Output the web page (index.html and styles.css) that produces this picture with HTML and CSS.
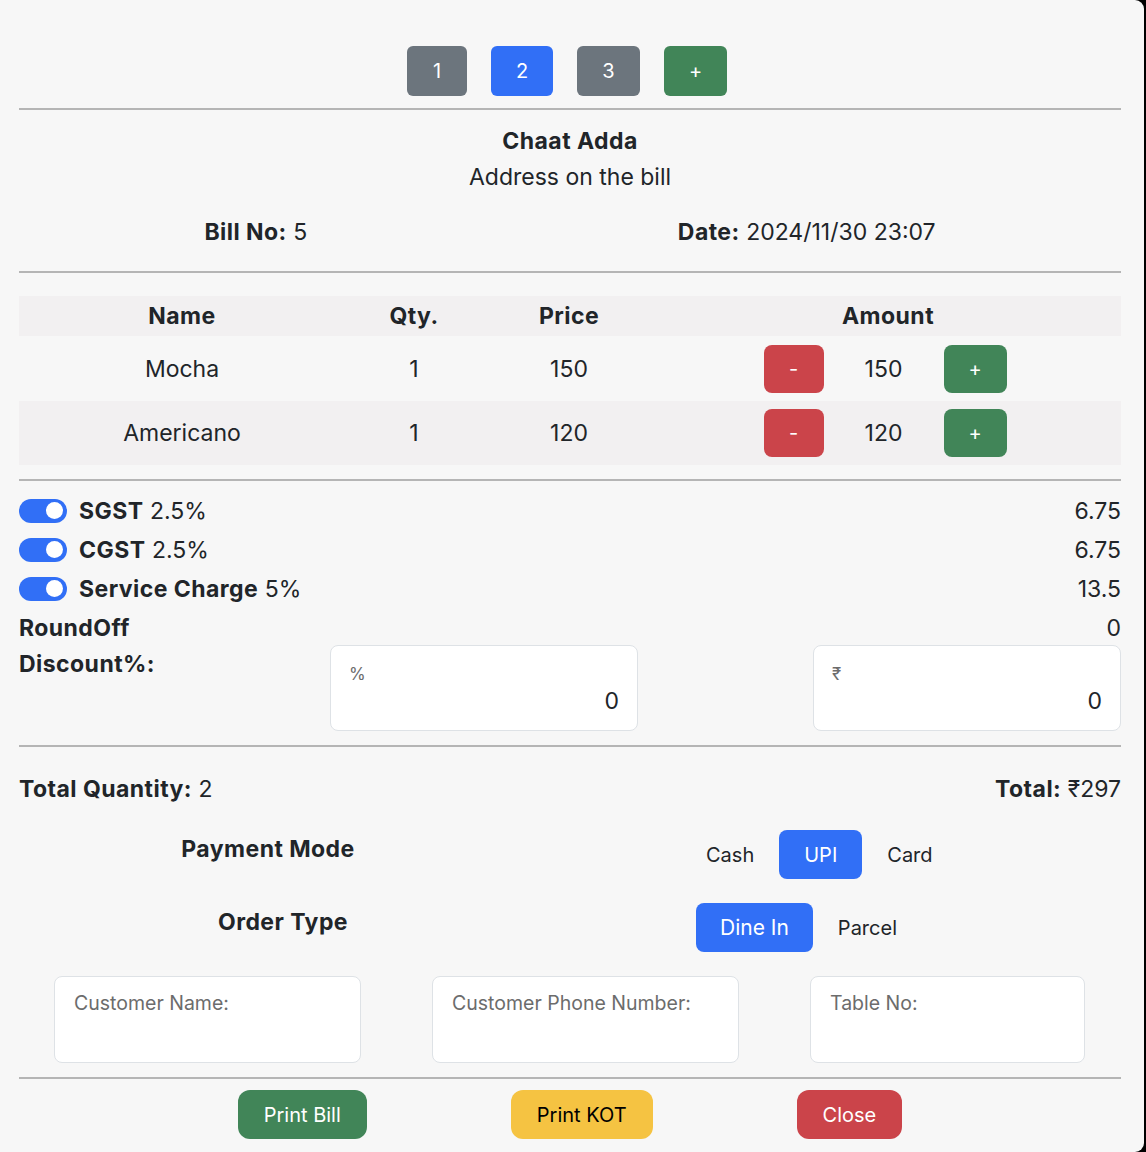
FILE: index.html
```html
<!DOCTYPE html>
<html>
<head>
<meta charset="utf-8">
<link rel="stylesheet" href="styles.css">
</head>
<body>
<div class="modal">
  <div class="tabs">
    <button class="btn tab gray narrow">1</button>
    <button class="btn tab blue">2</button>
    <button class="btn tab gray wide">3</button>
    <button class="btn tab green wide">+</button>
  </div>
  <hr class="sep sep-top">
  <div class="shop">
    <div class="shop-name">Chaat Adda</div>
    <div class="shop-addr">Address on the bill</div>
  </div>
  <div class="bill-meta">
    <div><b>Bill No:</b> 5</div>
    <div><b>Date:</b> 2024/11/30 23:07</div>
  </div>
  <hr class="sep">
  <table class="items">
    <thead>
      <tr><th class="c-name">Name</th><th class="c-qty">Qty.</th><th class="c-price">Price</th><th class="c-amt">Amount</th></tr>
    </thead>
    <tbody>
      <tr>
        <td>Mocha</td><td>1</td><td>150</td>
        <td><div class="amt"><button class="btn step red">-</button><span class="amt-val">150</span><button class="btn step green wide">+</button></div></td>
      </tr>
      <tr class="striped">
        <td>Americano</td><td>1</td><td>120</td>
        <td><div class="amt"><button class="btn step red">-</button><span class="amt-val">120</span><button class="btn step green wide">+</button></div></td>
      </tr>
    </tbody>
  </table>
  <hr class="sep sep-table">
  <div class="charges">
    <div class="charge"><span class="toggle"><span class="knob"></span></span><span><b>SGST</b> 2.5%</span><span class="val">6.75</span></div>
    <div class="charge"><span class="toggle"><span class="knob"></span></span><span><b>CGST</b> 2.5%</span><span class="val">6.75</span></div>
    <div class="charge"><span class="toggle"><span class="knob"></span></span><span><b>Service Charge</b> 5%</span><span class="val">13.5</span></div>
    <div class="charge"><span><b>RoundOff</b></span><span class="val">0</span></div>
  </div>
  <div class="discount">
    <div class="disc-label"><b>Discount%:</b></div>
    <div class="field">
      <span class="field-label small">%</span>
      <input class="field-input" type="text" value="0">
    </div>
    <div></div>
    <div class="field">
      <span class="field-label small">₹</span>
      <input class="field-input" type="text" value="0">
    </div>
  </div>
  <hr class="sep sep-disc">
  <div class="totals">
    <div><b>Total Quantity:</b> 2</div>
    <div><b>Total:</b> ₹297</div>
  </div>
  <div class="opt-row pay">
    <div class="opt-label">Payment Mode</div>
    <div class="opt-group">
      <button class="btn opt">Cash</button>
      <button class="btn opt blue">UPI</button>
      <button class="btn opt">Card</button>
    </div>
  </div>
  <div class="opt-row order">
    <div class="opt-label">Order Type</div>
    <div class="opt-group">
      <button class="btn opt blue big">Dine In</button>
      <button class="btn opt">Parcel</button>
    </div>
  </div>
  <div class="customer">
    <div class="field cust"><span class="field-label">Customer Name:</span><input class="field-input" type="text"></div>
    <div class="field cust"><span class="field-label">Customer Phone Number:</span><input class="field-input" type="text"></div>
    <div class="field cust"><span class="field-label">Table No:</span><input class="field-input" type="text"></div>
  </div>
  <hr class="sep sep-bottom">
  <div class="actions">
    <button class="btn action green">Print Bill</button>
    <button class="btn action yellow">Print KOT</button>
    <button class="btn action red">Close</button>
  </div>
</div>
</body>
</html>
```
FILE: styles.css
```css
html, body {
  margin: 0;
  padding: 0;
  background: #000;
}
body {
  font-family: Inter, "Noto Sans", sans-serif;
  color: #212529;
  font-size: 23px;
}
b, .shop-name, .opt-label, .items th {
  font-weight: 700;
  letter-spacing: 0.45px;
}
.modal {
  width: 1144px;
  height: 1152px;
  box-sizing: border-box;
  background: #f7f7f7;
  border-radius: 0 9px 9px 0;
  padding: 46px 23px 0 19px;
}
.btn {
  border: none;
  font-family: inherit;
  color: #fff;
  cursor: pointer;
  background: transparent;
  padding: 0;
}
.gray { background: #6c757d; }
.blue { background: #316ff6; color: #fff; }
.green { background: #418558; }
.red { background: #cb444a; }
.yellow { background: #f5c342; color: #000; }

.tabs {
  display: flex;
  justify-content: center;
  gap: 24px;
  padding-right: 6px;
}
.tab {
  width: 62px;
  height: 50px;
  border-radius: 6px;
  font-size: 20px;
}
.tab.narrow { width: 60px; }
.tab.wide { width: 63px; }
.sep {
  border: none;
  height: 2px;
  background: #b5b5b5;
  margin: 0;
}
.sep-top { margin-top: 12px; }
.shop {
  text-align: center;
  margin-top: 13px;
  line-height: 36px;
}
.bill-meta {
  display: flex;
  justify-content: space-around;
  line-height: 36px;
  margin-top: 19px;
  margin-bottom: 21px;
}
.items {
  width: 100%;
  border-collapse: collapse;
  margin-top: 23px;
  text-align: center;
  font-size: 23px;
}
.items th {
  height: 40px;
  padding: 0;
  background: #f2f0f1;
}
.c-name { width: 326px; }
.c-qty { width: 138px; }
.c-price { width: 172px; }
.items td {
  height: 64px;
  padding: 0;
}
.items tbody tr:first-child td { height: 65px; }
.striped td { background: #f2f0f1; }
.amt {
  display: flex;
  align-items: center;
  justify-content: center;
  padding-right: 6px;
}
.step {
  width: 60px;
  height: 48px;
  border-radius: 8px;
  font-size: 20px;
}
.step.wide { width: 63px; }
.amt-val {
  width: 120px;
  text-align: center;
}
.sep-table { margin-top: 14px; }
.charges { margin-top: 10px; }
.charge {
  display: flex;
  align-items: center;
  height: 39px;
}
.charge .val { margin-left: auto; }
.toggle {
  width: 48px;
  height: 24px;
  border-radius: 12px;
  background: #316ff6;
  display: flex;
  align-items: center;
  justify-content: flex-end;
  box-sizing: border-box;
  padding-right: 4px;
  margin-right: 12px;
}
.knob {
  width: 17px;
  height: 17px;
  border-radius: 50%;
  background: #fff;
}
.discount {
  display: grid;
  grid-template-columns: 311px 308px minmax(0, 1fr) 308px;
  margin-top: -2px;
}
.disc-label { line-height: 38px; }
.field {
  background: #fff;
  border: 1px solid #dee2e6;
  border-radius: 8px;
  height: 86px;
  box-sizing: border-box;
  display: flex;
  flex-direction: column;
  padding: 14px 18px 0 18px;
  min-width: 0;
}
.field-label {
  font-size: 19.5px;
  color: #6c6c6c;
  line-height: 24px;
  white-space: nowrap;
}
.field-label.small { font-size: 17px; padding-top: 2px; }
.field-input {
  border: none;
  outline: none;
  background: transparent;
  font-family: inherit;
  font-size: 23px;
  color: #212529;
  text-align: right;
  padding: 0;
  margin-top: 0;
  height: 30px;
  width: 100%;
  min-width: 0;
}
.sep-disc { margin-top: 14px; }
.totals {
  display: flex;
  justify-content: space-between;
  line-height: 36px;
  margin-top: 24px;
}
.opt-row {
  display: flex;
  align-items: flex-start;
  margin-top: 23px;
}
.opt-label {
  text-align: center;
  line-height: 36px;
}
.pay .opt-label { width: 498px; margin-top: 1px; }
.pay .opt-group { margin-left: 164px; }
.order { margin-top: 24px; }
.order .opt-label { width: 528px; margin-top: 1px; }
.order .opt-group { margin-left: 149px; }
.opt-group { display: flex; }
.opt {
  height: 49px;
  padding: 0 25px;
  font-size: 20px;
  color: #212529;
  border-radius: 8px;
}
.opt.blue { color: #fff; }
.opt.big { font-size: 21px; padding: 0 24px; }
.customer {
  display: grid;
  grid-template-columns: 307px 307px minmax(0, 1fr);
  gap: 71px;
  padding: 0 36px 0 35px;
  margin-top: 24px;
}
.cust {
  height: 87px;
  padding: 14px 19px 0 19px;
}
.cust .field-input { text-align: left; }
.sep-bottom { margin-top: 14px; }
.actions {
  display: flex;
  justify-content: center;
  gap: 144px;
  margin-top: 11px;
}
.action {
  height: 49px;
  border-radius: 12px;
  font-size: 20px;
  padding: 0 26px;
}
.action.yellow { color: #000; }
```
